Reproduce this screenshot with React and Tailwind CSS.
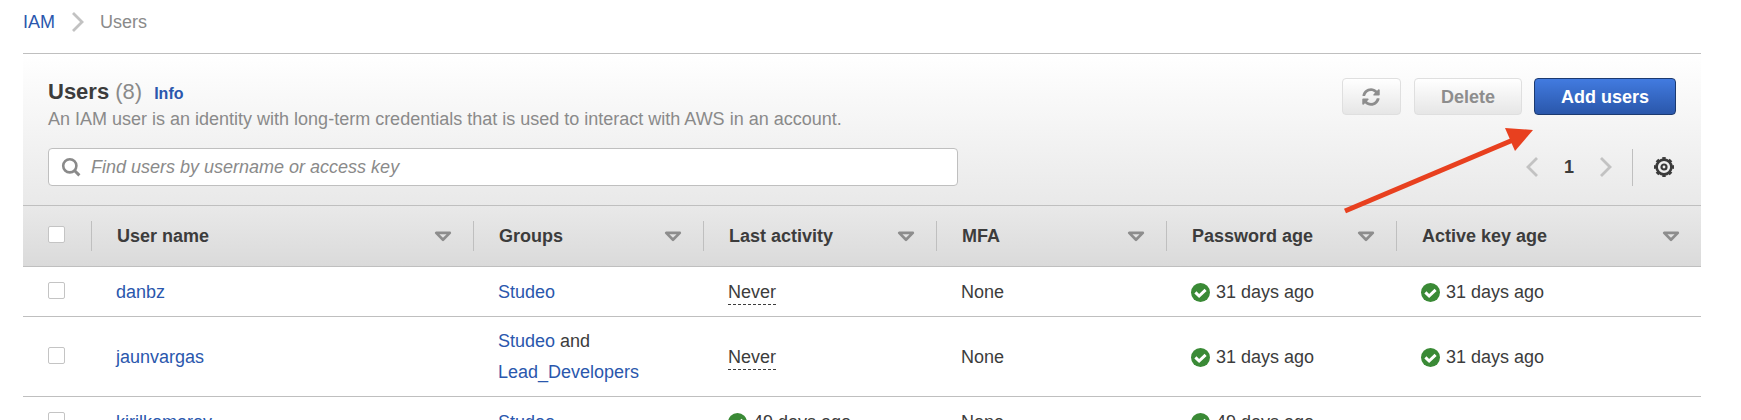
import { useState } from "react";

const CHECK_BOX =
  "mb-[3px] block size-[17px] appearance-none rounded-[2px] border border-[#c4c4c4] bg-white checked:bg-[#2a5bb5]";
const LINK = "text-[#2a57ad] hover:underline";

const columns = [
  { label: "User name", width: "w-[382px]" },
  { label: "Groups", width: "w-[230px]" },
  { label: "Last activity", width: "w-[233px]" },
  { label: "MFA", width: "w-[230px]" },
  { label: "Password age", width: "w-[230px]" },
  { label: "Active key age", width: "" },
];

const users = [
  { name: "danbz", groups: ["Studeo"], activity: null, mfa: "None", password: "31 days ago", key: "31 days ago" },
  { name: "jaunvargas", groups: ["Studeo", "Lead_Developers"], activity: null, mfa: "None", password: "31 days ago", key: "31 days ago" },
  { name: "kirilkomarov", groups: ["Studeo"], activity: "49 days ago", mfa: "None", password: "49 days ago", key: null },
];

function Chevron({ left = false, className = "" }) {
  return (
    <svg className={className} width="12" height="20" viewBox="0 0 12 20" fill="none" stroke="#c2c2c2" strokeWidth="2.8" aria-hidden="true">
      <path d={left ? "M11 1 2 10 11 19" : "M1 1 10 10 1 19"} />
    </svg>
  );
}

function SearchIcon() {
  return (
    <svg width="20" height="20" viewBox="0 0 20 20" fill="none" stroke="#8a8a8a" strokeWidth="2.6" aria-hidden="true">
      <circle cx="8.8" cy="8.8" r="6.6" />
      <path d="m13.2 13.2 5.2 5.2" strokeWidth="3" />
    </svg>
  );
}

function RefreshIcon() {
  return (
    <svg width="18" height="18" viewBox="0 0 512 512" fill="#8d8d8d" aria-hidden="true">
      <path d="M370.7 133.3C339.5 104 298.9 88 255.8 88c-77.5.1-144.3 53.2-162.8 126.9-1.3 5.4-6.1 9.1-11.7 9.1H24.1c-7.5 0-13.2-6.8-11.8-14.2C33.9 94.9 134.8 8 256 8c66.4 0 126.8 26.1 171.3 68.7L463 41c15.1-15.1 41-4.4 41 17v134c0 13.3-10.7 24-24 24H346c-21.4 0-32.1-25.9-17-41l41.7-41.7zM32 296h134c21.4 0 32.1 25.9 17 41l-41.8 41.8c31.3 29.3 71.8 45.3 114.9 45.3 77.4-.1 144.3-53.1 162.8-126.8 1.3-5.4 6.1-9.1 11.7-9.1h57.3c7.5 0 13.2 6.8 11.8 14.2C478.1 417.1 377.2 504 256 504c-66.4 0-126.8-26.1-171.3-68.7L49 471c-15.1 15.1-41 4.4-41-17V320c0-13.3 10.7-24 24-24z" />
    </svg>
  );
}

function GearIcon() {
  return (
    <svg width="20" height="20" viewBox="0 0 20 20" fill="none" stroke="#3a3a3a" aria-hidden="true">
      <circle cx="10" cy="10" r="7.4" strokeWidth="2.6" />
      <circle cx="10" cy="10" r="9" strokeWidth="2" pathLength="80" strokeDasharray="5 5" strokeDashoffset="2.5" />
      <circle cx="10" cy="10" r="2.5" strokeWidth="2.2" />
    </svg>
  );
}

function SortIcon() {
  return (
    <svg className="shrink-0" width="18" height="11" viewBox="0 0 18 11" fill="none" stroke="#8d8d8d" strokeWidth="2.7" strokeLinejoin="round" aria-hidden="true">
      <path d="M2.2 1.9h13.6L9 8.7z" />
    </svg>
  );
}

function Age({ children }) {
  return (
    <span className="flex items-center gap-1.5">
      <svg className="shrink-0" width="19" height="19" viewBox="0 0 19 19" fill="none" aria-hidden="true">
        <circle cx="9.5" cy="9.5" r="9.5" fill="#3a8a36" />
        <path d="m4.4 9.4 3.7 3.6 6.5-6.2" stroke="#fff" strokeWidth="3" />
      </svg>
      {children}
    </span>
  );
}

function Groups({ names }) {
  return names.map((name, i) => (
    <span key={name}>
      {i > 0 && " and "}
      <a href="#group" className={LINK}>{name}</a>
    </span>
  ));
}

export default function App() {
  const [query, setQuery] = useState("");

  return (
    <div className="h-screen overflow-hidden bg-white pr-10 pl-[23px] font-['Liberation_Sans',Arial,sans-serif] text-lg text-[#3c3c3c]">
      <nav aria-label="Breadcrumb" className="flex h-[53px] items-center pb-[9px]">
        <a href="#iam" className={LINK}>IAM</a>
        <Chevron className="mr-4 ml-[17px]" />
        <span className="text-[#8a8a8a]">Users</span>
      </nav>

      <main className="relative border-t border-[#bfbfbf]">
        <header className="flex flex-col gap-[17px] bg-linear-to-b from-white to-[#e9e9e9] px-[25px] pt-6 pb-[19px]">
          <div className="flex items-start justify-between">
            <div>
              <div className="flex items-baseline gap-3">
                <h1 className="text-[22px] leading-[27px] font-bold">
                  Users <span className="font-normal text-[#8a8a8a]">(8)</span>
                </h1>
                <a href="#info" className="text-base leading-[27px] font-bold text-[#2a57ad]">Info</a>
              </div>
              <p className="leading-6 text-[#8a8a8a]">
                An IAM user is an identity with long-term credentials that is used to interact with AWS in an account.
              </p>
            </div>
            <div className="flex font-bold">
              <button type="button" aria-label="Refresh" className="mr-[13px] flex h-[37px] w-[59px] items-center justify-center rounded-[4px] border border-[#dfdfdf] bg-linear-to-b from-white to-[#e6e6e6]">
                <RefreshIcon />
              </button>
              <button type="button" className="mr-3 h-[37px] rounded-[4px] border border-[#dfdfdf] bg-linear-to-b from-white to-[#e6e6e6] px-[26px] text-[#8d8d8d]">
                Delete
              </button>
              <button type="button" className="h-[37px] rounded-[4px] border border-[#1c3a70] bg-linear-to-b from-[#427be0] to-[#2a57ab] px-[26px] text-white">
                Add users
              </button>
            </div>
          </div>

          <div className="flex items-center justify-between">
            <label className="flex h-[38px] w-[910px] items-center gap-2.5 rounded-[4px] border border-[#bfbfbf] bg-white px-3">
              <SearchIcon />
              <input
                type="search"
                aria-label="Find users"
                placeholder="Find users by username or access key"
                value={query}
                onChange={(e) => setQuery(e.target.value)}
                className="flex-1 outline-none placeholder:text-[#8a8a8a] placeholder:italic"
              />
            </label>
            <div className="flex items-center">
              <button type="button" aria-label="Previous page"><Chevron left /></button>
              <span className="mx-[26px] font-bold">1</span>
              <button type="button" aria-label="Next page"><Chevron /></button>
              <span className="mr-[21px] ml-5 h-[37px] border-l border-[#bfbfbf]" />
              <button type="button" aria-label="Preferences" className="mr-0.5"><GearIcon /></button>
            </div>
          </div>
        </header>

        <table className="w-full table-fixed border-separate border-spacing-0 text-left">
          <thead>
            <tr className="bg-linear-to-b from-[#e9e9e9] to-[#dadada]">
              <th className="h-[62px] w-[69px] border-y border-[#bfbfbf] p-0">
                <div className="flex h-[30px] items-center border-r border-[#bfbfbf] pl-[25px]">
                  <input type="checkbox" aria-label="Select all users" className={CHECK_BOX} />
                </div>
              </th>
              {columns.map((column, i) => (
                <th key={column.label} className={`${column.width} border-y border-[#bfbfbf] p-0`}>
                  <button
                    type="button"
                    className={`flex h-[30px] w-full items-center justify-between border-[#bfbfbf] pr-[21px] pl-[25px] font-bold ${i < columns.length - 1 ? "border-r" : ""}`}
                  >
                    {column.label}
                    <SortIcon />
                  </button>
                </th>
              ))}
            </tr>
          </thead>
          <tbody className="leading-[31px]">
            {users.map((user) => (
              <tr key={user.name} className="[&>td]:h-[50px] [&>td]:border-b [&>td]:border-[#bfbfbf] [&>td]:pt-[9px] [&>td]:pb-2 [&>td]:pl-6 [&>td:first-child]:pl-[25px]">
                <td><input type="checkbox" aria-label={`Select ${user.name}`} className={CHECK_BOX} /></td>
                <td><a href="#user" className={LINK}>{user.name}</a></td>
                <td><Groups names={user.groups} /></td>
                <td>
                  {user.activity ? (
                    <Age>{user.activity}</Age>
                  ) : (
                    <span className="border-b border-dashed border-[#3c3c3c] pb-0.5">Never</span>
                  )}
                </td>
                <td>{user.mfa}</td>
                <td><Age>{user.password}</Age></td>
                <td>{user.key && <Age>{user.key}</Age>}</td>
              </tr>
            ))}
          </tbody>
        </table>

        <svg className="pointer-events-none absolute top-[73px] right-[166px]" width="192" height="88" viewBox="0 0 192 88" aria-hidden="true">
          <path d="M2 84 170 13" stroke="#e8401f" strokeWidth="5" />
          <path d="M162 1 190 3 172 24z" fill="#e8401f" />
        </svg>
      </main>
    </div>
  );
}
